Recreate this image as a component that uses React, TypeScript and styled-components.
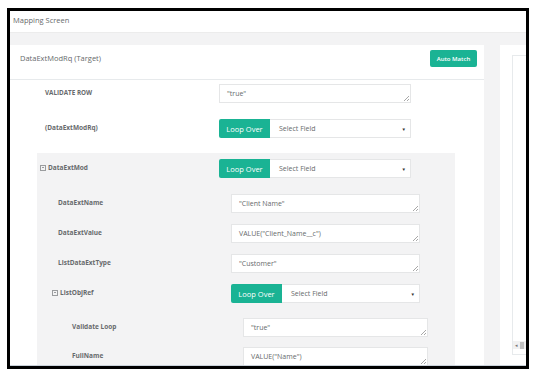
import React from "react";
import styled, { createGlobalStyle } from "styled-components";

const GlobalStyle = createGlobalStyle`
  html, body {
    margin: 0;
    padding: 0;
    background: #fff;
    font-family: "Open Sans", "Liberation Sans", sans-serif;
  }
`;

type Level = { indent: number; labelW: number; fieldW: number };

const TOP: Level = { indent: 35, labelW: 174, fieldW: 192 };
const SEC_HEAD: Level = { indent: 3, labelW: 179, fieldW: 192 };
const L1: Level = { indent: 21, labelW: 173, fieldW: 189 };
const L1_HEAD: Level = { indent: 15, labelW: 179, fieldW: 189 };
const L2: Level = { indent: 35, labelW: 171, fieldW: 185 };

function TextRow({ label, value, lv, mt, upper }: { label: string; value: string; lv: Level; mt: number; upper?: boolean }) {
  return (
    <Row $indent={lv.indent} $mt={mt}>
      <Label $w={lv.labelW} $upper={upper}>{label}</Label>
      <Field $w={lv.fieldW}>
        <Area readOnly defaultValue={value} />
      </Field>
    </Row>
  );
}

function LoopRow({ label, lv, mt, collapsible }: { label: string; lv: Level; mt: number; collapsible?: boolean }) {
  return (
    <Row $indent={lv.indent} $mt={mt}>
      <Label $w={lv.labelW}>
        {collapsible && <Minus />}
        {label}
      </Label>
      <Loop $w={lv.fieldW}>
        <LoopBtn>Loop Over</LoopBtn>
        <Select>
          <span>Select Field</span>
          <Caret>▼</Caret>
        </Select>
      </Loop>
    </Row>
  );
}

export default function App() {
  return (
    <>
      <GlobalStyle />
      <Frame>
        <Inner>
          <Header>Mapping Screen</Header>
          <Main>
            <Card>
              <CardHead>
                <CardTitle>DataExtModRq (Target)</CardTitle>
                <AutoBtn>Auto Match</AutoBtn>
              </CardHead>
              <CardBody>
                <TextRow label="VALIDATE ROW" value={'"true"'} lv={TOP} mt={4} upper />
                <LoopRow label="(DataExtModRq)" lv={TOP} mt={16} />
                <Section>
                  <LoopRow label="DataExtMod" lv={SEC_HEAD} mt={0} collapsible />
                  <TextRow label="DataExtName" value={'"Client Name"'} lv={L1} mt={16} />
                  <TextRow label="DataExtValue" value={'VALUE("Client_Name__c")'} lv={L1} mt={11} />
                  <TextRow label="ListDataExtType" value={'"Customer"'} lv={L1} mt={11} />
                  <LoopRow label="ListObjRef" lv={L1_HEAD} mt={11} collapsible />
                  <TextRow label="Validate Loop" value={'"true"'} lv={L2} mt={15} />
                  <TextRow label="FullName" value={'VALUE("Name")'} lv={L2} mt={10} />
                </Section>
              </CardBody>
            </Card>
            <SideCard>
              <SideBox>
                <ScrollBar>
                  <ScrollArrow>◂</ScrollArrow>
                  <ScrollThumb />
                </ScrollBar>
              </SideBox>
            </SideCard>
          </Main>
        </Inner>
      </Frame>
    </>
  );
}

const Frame = styled.div`
  margin: 8px 0 0 7px;
  width: 522px;
  height: 361px;
  box-sizing: border-box;
  border: 3px solid #000;
`;

const Inner = styled.div`
  height: 100%;
  display: flex;
  flex-direction: column;
  overflow: hidden;
  background: #f3f3f4;
`;

const Header = styled.div`
  height: 22px;
  flex: none;
  background: #fff;
  color: #676a6c;
  font-size: 7.5px;
  padding: 4px 0 0 3px;
  box-sizing: border-box;
  border-bottom: 1px solid #ececec;
`;

const Main = styled.div`
  flex: 1;
  min-height: 0;
  display: flex;
  gap: 16px;
  padding-top: 12px;
  border-bottom: 1px solid #c9d1d9;
  overflow: hidden;
`;

const Card = styled.div`
  width: 474px;
  flex: none;
  background: #fff;
  display: flex;
  flex-direction: column;
`;

const CardHead = styled.div`
  height: 35px;
  flex: none;
  box-sizing: border-box;
  display: flex;
  align-items: flex-start;
  justify-content: space-between;
  padding: 5px 7px 0 10px;
  border-bottom: 1px solid #e7eaec;
`;

const CardTitle = styled.div`
  font-size: 7.5px;
  line-height: 17px;
  color: #676a6c;
`;

const AutoBtn = styled.div`
  width: 47px;
  height: 17px;
  border-radius: 2px;
  background: #1ab394;
  color: #fff;
  font-size: 6px;
  font-weight: 600;
  display: flex;
  align-items: center;
  justify-content: center;
`;

const CardBody = styled.div`
  flex: 1;
  min-height: 0;
`;

const Section = styled.div`
  margin: 15px 0 0 27px;
  width: 418px;
  background: #f3f3f4;
  padding: 6px 0 20px;
`;

const Row = styled.div<{ $indent: number; $mt: number }>`
  display: flex;
  align-items: center;
  height: 19px;
  padding-left: ${({ $indent }) => $indent}px;
  margin-top: ${({ $mt }) => $mt}px;
`;

const Label = styled.div<{ $w: number; $upper?: boolean }>`
  width: ${({ $w }) => $w}px;
  flex: none;
  display: flex;
  align-items: center;
  gap: 2px;
  font-size: ${({ $upper }) => ($upper ? "6.3px" : "6.5px")};
  font-weight: 700;
  color: #676a6c;
  margin-top: ${({ $upper }) => ($upper ? "-3px" : "-2px")};
`;

const Minus = styled.span`
  width: 4px;
  height: 4px;
  border: 1px solid #9a9c9e;
  position: relative;
  flex: none;

  &::after {
    content: "";
    position: absolute;
    left: 1px;
    right: 1px;
    top: 1.5px;
    height: 1px;
    background: #9a9c9e;
  }
`;

const Field = styled.div<{ $w: number }>`
  width: ${({ $w }) => $w}px;
  height: 19px;
  position: relative;
  display: flex;

  &::after {
    content: "";
    position: absolute;
    right: 2px;
    bottom: 2px;
    width: 5px;
    height: 5px;
    background: linear-gradient(
      135deg,
      transparent 0 46%,
      #a8a8a8 46% 58%,
      transparent 58% 72%,
      #a8a8a8 72% 86%,
      transparent 86%
    );
  }
`;

const Area = styled.textarea`
  flex: 1;
  height: 19px;
  box-sizing: border-box;
  border: 1px solid #e5e6e7;
  background: #fff;
  color: #676a6c;
  font-family: "Open Sans", "Liberation Sans", sans-serif;
  font-size: 7px;
  line-height: 9px;
  padding: 4px 7px 0;
  resize: none;
  overflow: hidden;
  outline: none;
`;

const Loop = styled.div<{ $w: number }>`
  width: ${({ $w }) => $w}px;
  height: 19px;
  display: flex;
  box-sizing: border-box;
`;

const LoopBtn = styled.div`
  width: 51px;
  flex: none;
  background: #1ab394;
  color: #fff;
  font-size: 7.5px;
  border-radius: 2px 0 0 2px;
  display: flex;
  align-items: center;
  justify-content: center;
`;

const Select = styled.div`
  flex: 1;
  background: #fff;
  border: 1px solid #e5e6e7;
  border-left: none;
  display: flex;
  align-items: center;
  justify-content: space-between;
  padding: 0 4px 0 9px;
  font-size: 7px;
  color: #676a6c;
`;

const Caret = styled.span`
  font-size: 4.5px;
  color: #333;
`;

const SideCard = styled.div`
  flex: 1;
  background: #fff;
  padding: 10px 0 10px 12px;
  display: flex;
`;

const SideBox = styled.div`
  flex: 1;
  border: 1px solid #e7eaec;
  border-right: none;
  display: flex;
  flex-direction: column;
  justify-content: flex-end;
  padding-bottom: 5px;
`;

const ScrollBar = styled.div`
  height: 8px;
  display: flex;
  align-items: center;
  gap: 2px;
  padding-left: 2px;
  background: #f1f1f1;
`;

const ScrollArrow = styled.span`
  font-size: 5px;
  color: #777;
`;

const ScrollThumb = styled.span`
  width: 4px;
  height: 7px;
  background: #c1c1c1;
`;
